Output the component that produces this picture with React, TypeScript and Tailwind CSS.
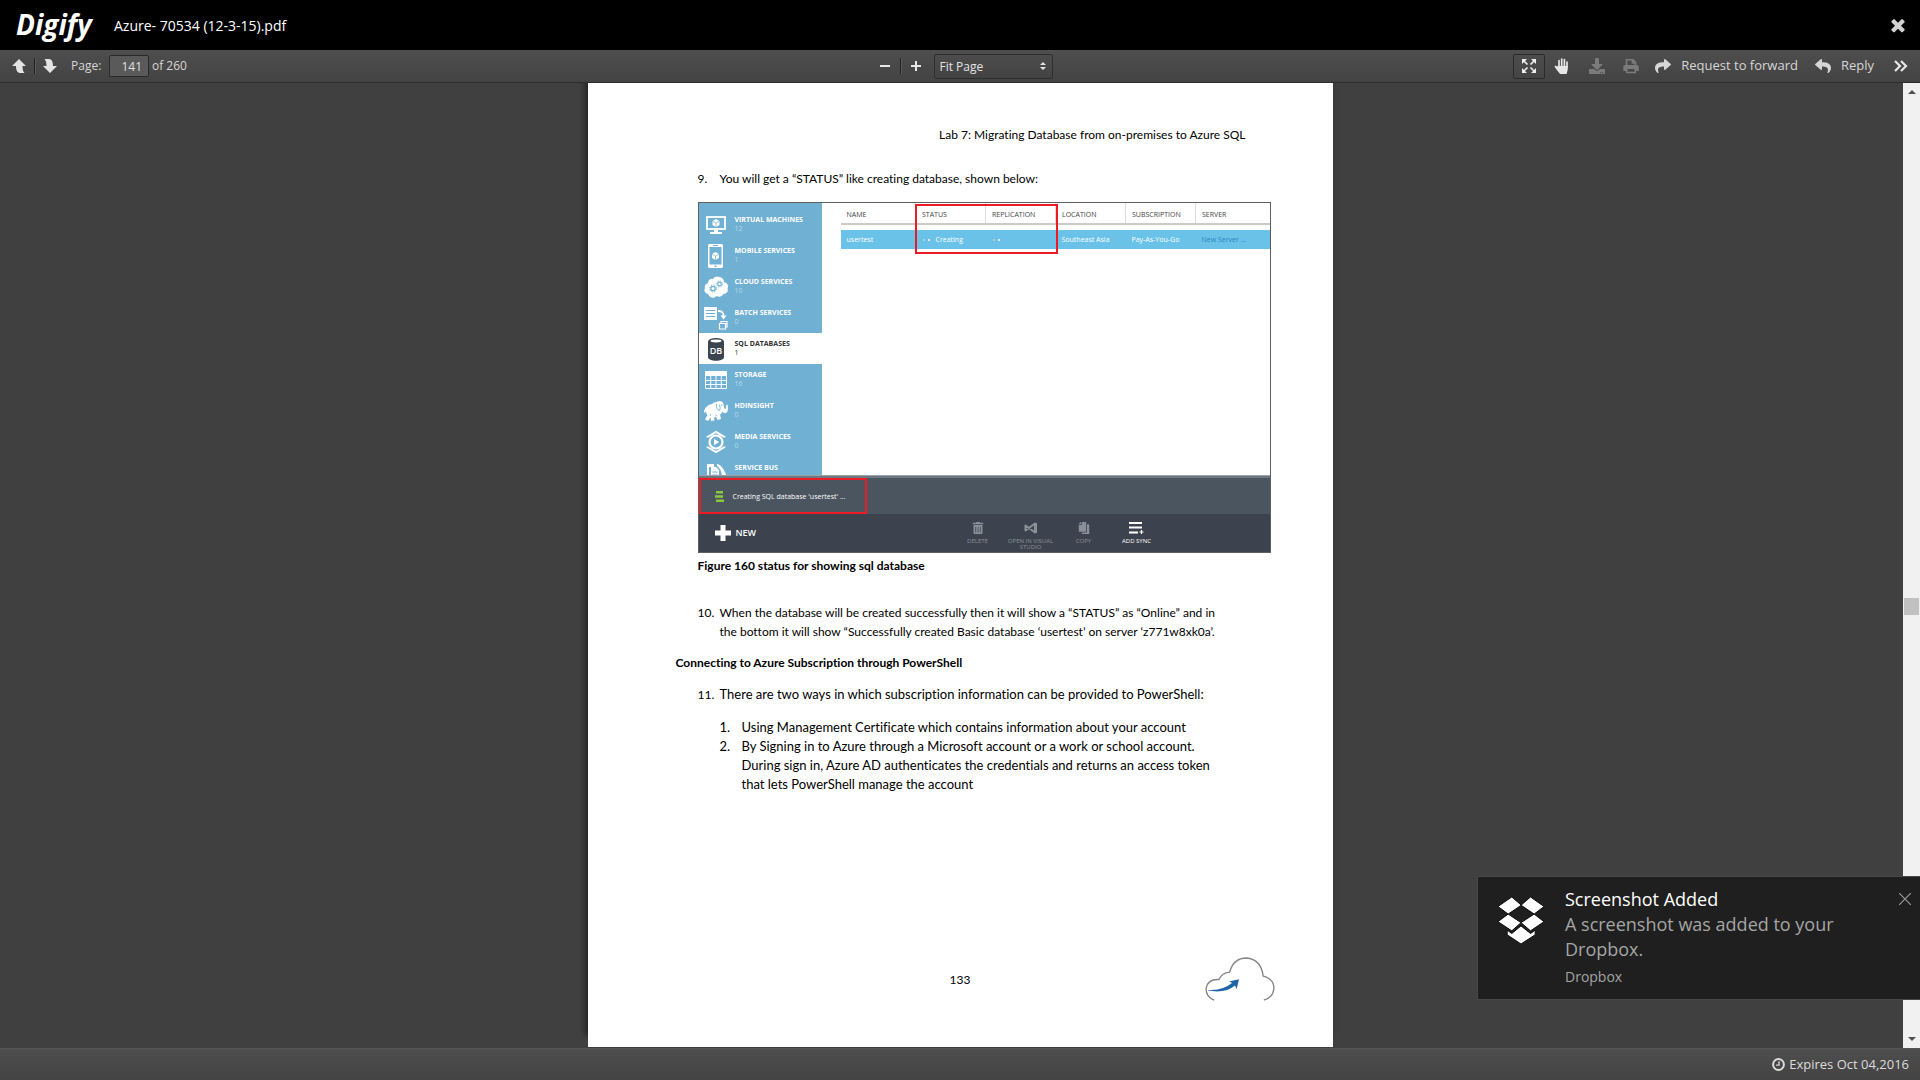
import React from "react";
import { FaDownload, FaShare, FaReply, FaTrashAlt, FaCopy } from "react-icons/fa";

const HEADER_COLS = [
  { name: "NAME", value: "usertest" },
  { name: "STATUS", value: "Creating" },
  { name: "REPLICATION", value: "" },
  { name: "LOCATION", value: "Southeast Asia" },
  { name: "SUBSCRIPTION", value: "Pay-As-You-Go" },
  { name: "SERVER", value: "New Server ..." },
];

function Cube({ cx, cy }: { cx: number; cy: number }) {
  return (
    <g transform={`translate(${cx} ${cy})`}>
      <path d="M0 -4L3.5 -2V2L0 4L-3.5 2V-2Z" fill="currentColor" />
      <path d="M-3.5 -2L0 0L3.5 -2M0 0V4" stroke="#70b0d3" strokeWidth="0.7" fill="none" />
    </g>
  );
}

const ICONS: Record<string, React.ReactNode> = {
  vm: (
    <svg viewBox="0 0 24 24" className="size-6">
      <rect x="3" y="4" width="18" height="12" fill="none" stroke="currentColor" strokeWidth="1.8" />
      <Cube cx={12} cy={10} />
      <path d="M10 17h4v2h4v2H6v-2h4z" fill="currentColor" />
    </svg>
  ),
  mobile: (
    <svg viewBox="0 0 24 24" className="size-6">
      <path fillRule="evenodd" d="M5.5 0h12a1.500 1.500 0 0 1 1.500 1.500v21a1.500 1.500 0 0 1-1.500 1.500h-12A1.500 1.500 0 0 1 4 22.500v-21A1.500 1.500 0 0 1 5.500 0zM5.500 3v17.500h12V3zM9 1v1h5V1zM10.500 21.500v1.500h2v-1.500z" fill="currentColor" />
      <Cube cx={11.5} cy={12} />
    </svg>
  ),
  cloud: (
    <svg viewBox="0 0 24 24" className="size-6">
      <path d="M4 19a4 4 0 0 1-3-6A4 4 0 0 1 4 8a4 4 0 0 1 5-4a4.500 4.500 0 0 1 6-2a5 5 0 0 1 5 5a4.500 4.500 0 0 1 3.500 6.500a4 4 0 0 1-4 5.500a5 5 0 0 1-7 2a5 5 0 0 1-8.500-2z" fill="currentColor" />
      <g fill="none" stroke="#70b0d3">
        <circle cx="9" cy="13.500" r="2.200" strokeWidth="1.300" />
        <circle cx="9" cy="13.500" r="3.500" strokeWidth="1" strokeDasharray="1.300 1.449" />
        <circle cx="15.500" cy="9" r="1.800" strokeWidth="1.200" />
        <circle cx="15.500" cy="9" r="3" strokeWidth="1" strokeDasharray="1.150 1.206" />
      </g>
    </svg>
  ),
  batch: (
    <svg viewBox="0 0 24 24" className="size-6">
      <path fillRule="evenodd" d="M0 1h13v13H0zM2 4v1h9V4zM2 7v1h9V7zM2 10v1h9v-1z" fill="currentColor" />
      <path d="M14 5c5 0 5.500 2 5.500 5" stroke="currentColor" strokeWidth="1.800" fill="none" />
      <path d="M16.500 9.500h6l-3 4z" fill="currentColor" />
      <path d="M15.500 17.500h6v5.500h-6zM17 17.500v-2h6v5.500h-1.500" stroke="currentColor" strokeWidth="1.200" fill="none" />
    </svg>
  ),
  sql: (
    <svg viewBox="0 0 24 24" className="size-6">
      <path d="M4 5v15c0 5 16 5 16 0V5z" fill="#3b444f" />
      <ellipse cx="12" cy="4.500" rx="8" ry="3.500" fill="#3b444f" />
      <ellipse cx="12" cy="4" rx="5.500" ry="1.400" fill="#fff" />
      <text x="12" y="17" textAnchor="middle" fontSize="9" fontWeight="600" fill="#fff" fontFamily="Open Sans, sans-serif">DB</text>
    </svg>
  ),
  storage: (
    <svg viewBox="0 0 24 24" className="size-6">
      <path d="M1 3h22v5H1z" fill="currentColor" />
      <path d="M1.500 8v12.500h21V8M1 12.500h22M1 16.500h22M6.700 8v13M12 8v13M17.300 8v13" stroke="currentColor" strokeWidth="1" fill="none" />
    </svg>
  ),
  hd: (
    <svg viewBox="0 0 24 24" className="size-6">
      <path
        d="M8 5C10 3 12 3 13 3c2-2 6-1 6.500 2c.4 2 .5 4 1.500 5c1 .3 1.500-1 1-4l1.500-.5c1 4 .5 8-2 8.500c-1.500.3-2.500-.5-3-1.500c-.5 1.500-1.500 2.500-2.500 3l1 4.500l-3.500 1l-1.500-3l-2 .5l.5 3l-3.500.5l-.5-3.500l-2.500 3.500L1 20.500l2.500-4.500c-1-1-1.500-2.500-1.500-4L.8 14L0 13c.5-4 3-7 8-8z"
        fill="currentColor"
      />
      <path d="M12.500 5c-.5 3 .5 6 3 6.500c1-2 .8-4-.5-6" stroke="#70b0d3" strokeWidth="0.900" fill="none" />
      <path d="M6 17l1-2M13 17.500l-1.500-2" stroke="#70b0d3" strokeWidth="0.800" />
      <circle cx="17.500" cy="6" r="0.700" fill="#70b0d3" />
    </svg>
  ),
  media: (
    <svg viewBox="0 0 24 24" className="size-6">
      <path d="M3.500 7.500V7L12 1.800L20.500 7v.5M3.500 16.500v.5l8.500 5.200l8.500-5.200v-.5" stroke="currentColor" strokeWidth="2" fill="none" />
      <circle cx="12" cy="12" r="6.500" stroke="currentColor" strokeWidth="2.200" fill="none" />
      <path d="M10 8.800l5 3.200-5 3.200z" fill="currentColor" />
    </svg>
  ),
  bus: (
    <svg viewBox="0 0 24 24" className="size-6">
      <path d="M3 3h7v3H5v17H3z" fill="currentColor" />
      <path d="M7 6h5l3 3v14H7z" fill="currentColor" />
      <path d="M8.500 11h5M8.500 14h5" stroke="#70b0d3" />
      <path d="M13 3c4 0 8 7 10 13h-5c0-5-2-9-5-11z" fill="currentColor" />
    </svg>
  ),
};

const SERVICES = [
  { icon: "vm", label: "VIRTUAL MACHINES", count: "12" },
  { icon: "mobile", label: "MOBILE SERVICES", count: "1" },
  { icon: "cloud", label: "CLOUD SERVICES", count: "10" },
  { icon: "batch", label: "BATCH SERVICES", count: "0" },
  { icon: "sql", label: "SQL DATABASES", count: "1", active: true },
  { icon: "storage", label: "STORAGE", count: "16" },
  { icon: "hd", label: "HDINSIGHT", count: "0" },
  { icon: "media", label: "MEDIA SERVICES", count: "0" },
  { icon: "bus", label: "SERVICE BUS", count: "" },
];

function TopBar() {
  return (
    <header className="flex h-[50px] shrink-0 items-center bg-black pl-4 pr-3 text-white">
      <span className="w-[98px] pb-0.5 text-[28px] font-bold italic leading-none">Digify</span>
      <h1 className="flex-1 text-[14px]">Azure- 70534 (12-3-15).pdf</h1>
      <button aria-label="Close" className="text-[#d2d2d2]">
        <svg viewBox="0 0 1792 1792" className="size-5" fill="currentColor">
          <path d="M1490 1322q0 40-28 68l-136 136q-28 28-68 28t-68-28l-294-294-294 294q-28 28-68 28t-68-28l-136-136q-28-28-28-68t28-68l294-294-294-294q-28-28-28-68t28-68l136-136q28-28 68-28t68 28l294 294 294-294q28-28 68-28t68 28l136 136q28 28 28 68t-28 68l-294 294 294 294q28 28 28 68z" />
        </svg>
      </button>
    </header>
  );
}

function Divider() {
  return <span className="h-4 w-px bg-[#222] shadow-[1px_0_0_#5a5a5a]" />;
}

function Toolbar() {
  return (
    <div className="grid h-[33px] shrink-0 grid-cols-[1fr_auto_1fr] items-center border-b border-[#2c2c2c] bg-linear-to-b from-[#4e4e4e] to-[#434343] text-[13px] text-[#d6d6d6]">
      <div className="flex items-center pl-3">
        <button aria-label="Previous page" className="text-[#e4e4e4]">
          <svg viewBox="0 0 14 14" className="size-[14px]" fill="currentColor">
            <path d="M7 0l7 7h-3.500c0 3 .3 5 2 7H7.500C4.500 13 4 10 4 7H0z" />
          </svg>
        </button>
        <span className="w-2" />
        <Divider />
        <span className="w-2" />
        <button aria-label="Next page" className="text-[#e4e4e4]">
          <svg viewBox="0 0 14 14" className="size-[14px]" fill="currentColor">
            <path d="M7 14l7-7h-4c0-3-.5-6-3.500-7H1.500c1.700 2 2 4 2 7H0z" />
          </svg>
        </button>
        <label htmlFor="page" className="ml-[14px] w-[38px] text-[12px]">Page:</label>
        <input
          id="page"
          defaultValue="141"
          className="h-[22px] w-10 rounded-[2px] border border-[#2a2a2a] bg-[#5a5a5a] pr-1.5 text-right text-[12px] text-[#e0e0e0]"
        />
        <span className="ml-[3px] text-[12px]">of 260</span>
      </div>

      <div className="flex items-center pl-3">
        <button aria-label="Zoom out" className="text-[#e8e8e8]">
          <svg viewBox="0 0 10 10" className="size-[10px]"><path d="M0 5h10" stroke="currentColor" strokeWidth="2" /></svg>
        </button>
        <span className="w-[10px]" />
        <Divider />
        <span className="w-[10px]" />
        <button aria-label="Zoom in" className="text-[#e8e8e8]">
          <svg viewBox="0 0 10 10" className="size-[10px]"><path d="M0 5h10M5 0v10" stroke="currentColor" strokeWidth="2" /></svg>
        </button>
        <div className="relative ml-[13px]">
          <select
            aria-label="Zoom level"
            className="h-[25px] w-[119px] appearance-none rounded-[2px] border border-[#2e2e2e] bg-linear-to-b from-[#4c4c4c] to-[#434343] pl-[5px] pt-px text-[12px] text-[#e4e4e4]"
          >
            <option>Fit Page</option>
          </select>
          <svg viewBox="0 0 6 8" className="pointer-events-none absolute right-[7px] top-2 h-2 w-1.5" fill="#e4e4e4">
            <path d="M0 3l3-3 3 3zM0 5h6L3 8z" />
          </svg>
        </div>
      </div>

      <div className="flex items-center justify-end pr-3 text-[13px]">
        <button aria-label="Full screen" className="flex h-[25px] w-8 items-center justify-center rounded-[2px] border border-[#2a2a2a] text-[#eee]">
          <svg viewBox="0 0 14 14" className="size-[14px]" fill="currentColor" stroke="currentColor" strokeWidth="1.600">
            <path stroke="none" d="M0 0h5L0 5zM14 0H9l5 5zM0 14h5L0 9zM14 14H9l5-5z" />
            <path d="M2 2l3.500 3.500M12 2L8.500 5.500M2 12l3.500-3.500M12 12L8.500 8.500" />
          </svg>
        </button>
        <button aria-label="Pan" className="ml-[9px] text-[#e6e6e6]">
          <svg viewBox="0 0 16 16" className="size-4" fill="none" stroke="currentColor" strokeWidth="1.700" strokeLinecap="round">
            <path d="M5 8.500V2.500M7.700 8V1M10.400 8V1.600M13 9V4M1.500 8.500l3 3.500" />
            <path stroke="none" fill="currentColor" d="M4.200 8h9.600v2.500c0 1.500-.6 3-1.200 5.500H6.200C4.500 14 2.500 11.500.8 9z" />
          </svg>
        </button>
        <button aria-label="Download" className="ml-[19px] text-[#7b7b7b]"><FaDownload className="size-4" /></button>
        <button aria-label="Print" className="ml-[18px] text-[#7b7b7b]">
          <svg viewBox="0 0 16 16" className="size-4" fill="none" stroke="currentColor" strokeWidth="1.600">
            <path d="M3.500 8V1.800h6.500l2.500 2.500V8M9.500 2v3h3" />
            <path stroke="none" fill="currentColor" fillRule="evenodd" d="M2 7h12a1.700 1.700 0 0 1 1.700 1.700V13H13v2.300H3V13H.3V8.700A1.700 1.700 0 0 1 2 7zM4.500 11v2.700h7V11z" />
          </svg>
        </button>
        <button className="ml-4 flex items-center gap-[10px]">
          <FaShare className="size-4" />
          Request to forward
        </button>
        <button className="ml-[17px] flex items-center gap-[10px]">
          <FaReply className="size-4" />
          Reply
        </button>
        <button aria-label="More" className="ml-5 text-[#e6e6e6]">
          <svg viewBox="0 0 14 12" className="h-3 w-[14px]" fill="none" stroke="currentColor" strokeWidth="2.200"><path d="M1 1l5 5-5 5M7 1l5 5-5 5" /></svg>
        </button>
      </div>
    </div>
  );
}

function Dots() {
  return (
    <span className="mr-1.5 inline-flex gap-[3px] pl-px align-middle">
      <i className="size-[2px] bg-[#b9c9d2]" />
      <i className="size-[2px] bg-[#e3eef4]" />
    </span>
  );
}

function AzurePortal() {
  return (
    <figure>
      <div className="flex h-[351px] w-[573px] flex-col overflow-hidden border border-[#5f5f5f] bg-white font-['Open_Sans',sans-serif] text-[7px] leading-[9px]">
        <div className="flex min-h-0 flex-1 overflow-hidden">
          <ul className="w-[123px] bg-[#70b0d3] pt-[6px] text-white">
            {SERVICES.map((s) => (
              <li
                key={s.label}
                className={
                  s.active
                    ? "flex h-[31px] items-center gap-[7px] bg-white pl-[5px] text-[#333]"
                    : "flex h-[31px] items-center gap-[7px] pl-[5px]"
                }
              >
                {ICONS[s.icon]}
                <div className="h-5">
                  <div className="font-bold">{s.label}</div>
                  <div className={s.active ? "" : "text-[#b4d8ea]"}>{s.count}</div>
                </div>
              </li>
            ))}
          </ul>
          <div className="relative flex-1 pl-[19px]">
            <table className="w-full table-fixed border-collapse text-left">
              <colgroup>
                <col className="w-[75px]" />
                <col className="w-[70px]" />
                <col className="w-[70px]" />
                <col className="w-[70px]" />
                <col className="w-[70px]" />
                <col />
              </colgroup>
              <thead>
                <tr className="h-[21px] border-b-2 border-[#cbcbcb] text-[#444]">
                  {HEADER_COLS.map((c, i) => (
                    <th key={c.name} className={i === 0 ? "pl-1.5 pt-0.5 font-normal" : "border-l border-[#ddd] pl-1.5 pt-0.5 font-normal"}>
                      {c.name}
                    </th>
                  ))}
                </tr>
              </thead>
              <tbody>
                <tr className="h-[6px]" />
                <tr className="h-[19px] bg-[#6ac2e9] text-white">
                  {HEADER_COLS.map((c, i) => (
                    <td key={c.name} className={i === 5 ? "whitespace-nowrap pl-1.5 text-[#2a86c0]" : "whitespace-nowrap pl-1.5"}>
                      {(i === 1 || i === 2) && <Dots />}
                      {c.value}
                    </td>
                  ))}
                </tr>
              </tbody>
            </table>
            <div className="absolute left-[93px] top-px h-[50px] w-[143px] border-2 border-[#ed1c24]" />
          </div>
        </div>
        <div className="h-[3px] shrink-0 border-t border-[#9aa2aa] bg-[#6d7883]" />
        <div className="flex h-[36px] shrink-0 bg-[#4a5560] text-white">
          <div className="flex w-[168px] items-center gap-[9px] border-2 border-[#ed1c24] pl-[14px]">
            <svg viewBox="0 0 9 11" className="h-[11px] w-[9px] shrink-0" fill="#8dc63f">
              <path d="M1 0h7v2.500H1zM0 4.300h8v2.500H0zM1 8.500h8V11H1z" />
            </svg>
            <span className="whitespace-nowrap">Creating SQL database 'usertest' ...</span>
          </div>
        </div>
        <div className="flex h-[38px] shrink-0 bg-[#3c434e] text-[6px] leading-[6px] text-[#8a9097]">
          <div className="flex w-[254px] items-center gap-[5px] pl-4 text-[9px] font-semibold text-white">
            <svg viewBox="0 0 16 16" className="size-4"><path d="M8 0v16M0 8h16" stroke="currentColor" strokeWidth="5" /></svg>
            NEW
          </div>
          <div className="flex w-[50px] flex-col items-center gap-1 pt-2">
            <FaTrashAlt className="size-3" />
            DELETE
          </div>
          <div className="flex w-[56px] flex-col items-center gap-1 pt-2 text-center">
            <svg viewBox="0 0 14 12" className="h-3 w-[14px] shrink-0" fill="none" stroke="currentColor" strokeWidth="2">
              <path d="M1.500 3.500v5L11 1.500v9z" strokeLinejoin="round" /><path d="M12 1v10" />
            </svg>
            OPEN IN VISUAL STUDIO
          </div>
          <div className="flex w-[50px] flex-col items-center gap-1 pt-2">
            <FaCopy className="size-3 -scale-x-100" />
            COPY
          </div>
          <div className="flex w-[56px] flex-col items-center gap-1 pt-2 text-white">
            <svg viewBox="0 0 15 12" className="h-3 w-[15px]" stroke="currentColor" strokeWidth="2">
              <path d="M0 1h13M0 5.500h13M0 10.500h9" /><path d="M12.500 8v4M10.500 10h4" strokeWidth="1.200" />
            </svg>
            ADD SYNC
          </div>
        </div>
      </div>
      <figcaption className="mt-1 text-[12px] font-bold leading-[18px]">Figure 160 status for showing sql database</figcaption>
    </figure>
  );
}

function DocumentPage() {
  return (
    <article className="flex w-[745px] flex-col bg-white pt-[43px] font-[Lato,sans-serif] text-[12px] leading-[19px] text-black shadow-[-3px_-12px_6px_#222] [font-variant-ligatures:none]">
      <div className="pr-[87px] text-right leading-[18px]">Lab 7: Migrating Database from on-premises to Azure SQL</div>
      <div className="mt-[25px] flex pl-[110px]">
        <span className="w-[22px]">9.</span>
        <p>You will get a “STATUS” like creating database, shown below:</p>
      </div>
      <div className="mt-[14px] pl-[110px]">
        <AzurePortal />
      </div>
      <div className="mt-7 flex pl-[110px]">
        <span className="w-[22px]">10.</span>
        <p className="whitespace-nowrap">
          When the database will be created successfully then it will show a “STATUS” as “Online” and in
          <br />
          the bottom it will show “Successfully created Basic database ‘usertest’ on server ‘z771w8xk0a’.
        </p>
      </div>
      <h2 className="mt-[13px] pl-[88px] font-bold leading-[18px]">Connecting to Azure Subscription through PowerShell</h2>
      <div className="mt-[13px] flex pl-[110px]">
        <span className="w-[22px]">11.</span>
        <p className="text-[13px]">There are two ways in which subscription information can be provided to PowerShell:</p>
      </div>
      <ol className="mt-[14px] pl-[132px] text-[13px]">
        <li className="flex">
          <span className="w-[22px]">1.</span>
          <p>Using Management Certificate which contains information about your account</p>
        </li>
        <li className="flex">
          <span className="w-[22px]">2.</span>
          <p className="whitespace-nowrap">
            By Signing in to Azure through a Microsoft account or a work or school account.
            <br />
            During sign in, Azure AD authenticates the credentials and returns an access token
            <br />
            that lets PowerShell manage the account
          </p>
        </li>
      </ol>
      <footer className="mt-auto grid grid-cols-3 items-center pb-[46px]">
        <span />
        <span className="text-center">133</span>
        <svg viewBox="77 175 208 131" className="mr-[57px] h-[44px] w-[70px] justify-self-end" fill="none">
          <path
            d="M104 303Q80 296 80 269Q84 240 118 242Q128 222 150 220Q162 178 200 178Q244 182 250 232Q282 240 282 268Q280 296 252 303"
            stroke="#858585"
            strokeWidth="4"
          />
          <path d="M86 273Q130 276 158 252L148 248L178 241L171 271L166 260Q138 284 86 275z" fill="#1f66a8" />
        </svg>
      </footer>
    </article>
  );
}

function Scrollbar() {
  return (
    <div className="flex w-[17px] flex-col items-center justify-between bg-[#f1f1f1] py-[7px]">
      <svg viewBox="0 0 8 4" className="h-1 w-2" fill="#505050"><path d="M0 4l4-4 4 4z" /></svg>
      <span className="mt-[82px] h-[17px] w-[15px] bg-[#c1c1c1]" />
      <svg viewBox="0 0 8 4" className="h-1 w-2" fill="#505050"><path d="M0 0l4 4 4-4z" /></svg>
    </div>
  );
}

function Toast() {
  return (
    <aside className="absolute bottom-20 right-0 flex w-[443px] border border-r-0 border-[#484848] bg-[#1f1f1f] pb-[10px] pl-[18px] pt-[10px]">
      <svg viewBox="109 105 150 152" className="mt-2 size-[50px]" fill="#fff" stroke="#0c0c0c" strokeWidth="3">
        <path d="M142 212L156 222L184 199L213 222L227 212V226L184 254L142 226z" />
        <path d="M114 140L156 111L185 136L145 163zM254 140L213 111L184 136L224 163zM114 186L145 163L184 189L156 214zM254 186L224 163L184 189L213 214z" />
      </svg>
      <div className="ml-[19px] flex-1 text-[18px] leading-[25px] text-[#a5a5a5]">
        <div className="text-white">Screenshot Added</div>
        <p>A screenshot was added to your<br />Dropbox.</p>
        <div className="mt-[2px] text-[14px]">Dropbox</div>
      </div>
      <button aria-label="Dismiss notification" className="mr-[9px] mt-[6px] self-start text-[#9a9a9a]">
        <svg viewBox="0 0 12 12" className="size-3" stroke="currentColor" strokeWidth="1.200"><path d="M0 0l12 12M12 0L0 12" /></svg>
      </button>
    </aside>
  );
}

export default function App() {
  return (
    <div className="flex h-screen flex-col overflow-hidden bg-[#404040] font-['Open_Sans',sans-serif]">
      <TopBar />
      <Toolbar />
      <main className="relative flex min-h-0 flex-1">
        <div className="flex min-w-0 flex-1 justify-center overflow-hidden pb-px pl-[17px]">
          <DocumentPage />
        </div>
        <Scrollbar />
      </main>
      <footer className="flex h-8 shrink-0 items-center justify-end gap-1 border-t border-[#555] bg-linear-to-b from-[#4e4e4e] to-[#434343] pr-[11px] text-[13px] text-[#dcdcdc]">
        <svg viewBox="0 0 12 12" className="size-[13px]" fill="none" stroke="currentColor">
          <circle cx="6" cy="6" r="5" strokeWidth="1.800" />
          <path d="M6.500 3v3.500H3.800" strokeWidth="1.200" />
        </svg>
        Expires Oct 04,2016
      </footer>
      <div className="relative"><Toast /></div>
    </div>
  );
}
